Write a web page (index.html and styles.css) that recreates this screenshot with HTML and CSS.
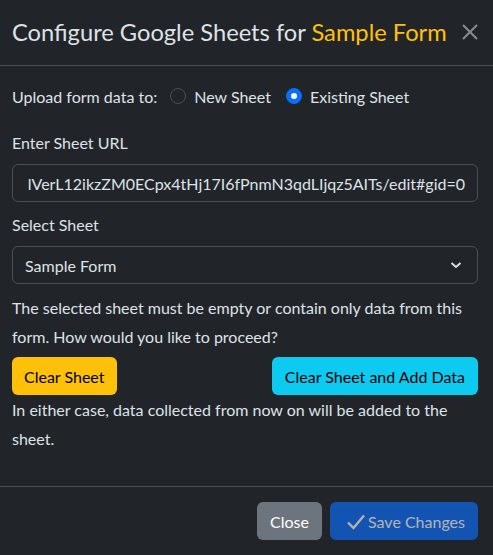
FILE: index.html
```html
<!DOCTYPE html>
<html lang="en">
<head>
<meta charset="utf-8">
<title>Configure Google Sheets</title>
<link rel="stylesheet" href="styles.css">
</head>
<body>
<div class="modal">
  <header class="modal-header">
    <h1 class="modal-title">Configure Google Sheets for <span class="accent">Sample Form</span></h1>
    <button class="btn-close" aria-label="Close">
      <svg width="16" height="16" viewBox="0 0 16 16"><path d="M1 1L15 15M15 1L1 15" stroke="currentColor" stroke-width="2" fill="none"/></svg>
    </button>
  </header>
  <main class="modal-body">
    <div class="radio-row">
      <span class="radio-label">Upload form data to:</span>
      <label class="radio"><span class="radio-input"></span>New Sheet</label>
      <label class="radio"><span class="radio-input checked"></span>Existing Sheet</label>
    </div>
    <div class="field">
      <label class="field-label">Enter Sheet URL</label>
      <div class="input"><div class="input-clip"><span class="input-text">lVerL12ikzZM0ECpx4tHj17I6fPnmN3qdLIjqz5AITs/edit#gid=0</span></div></div>
    </div>
    <div class="field field-select">
      <label class="field-label">Select Sheet</label>
      <div class="select">
        <span>Sample Form</span>
        <svg class="chevron" width="12" height="8" viewBox="0 0 12 8"><path d="M1.5 2L6 6L10.5 2" stroke="#dee2e6" stroke-width="1.8" fill="none"/></svg>
      </div>
    </div>
    <p class="note">The selected sheet must be empty or contain only data from this form. How would you like to proceed?</p>
    <div class="choice-row">
      <button class="btn btn-warning">Clear Sheet</button>
      <button class="btn btn-info">Clear Sheet and Add Data</button>
    </div>
    <p class="note note-after">In either case, data collected from now on will be added to the sheet.</p>
  </main>
  <footer class="modal-footer">
    <button class="btn btn-secondary">Close</button>
    <button class="btn btn-primary" disabled>
      <svg class="check" width="20" height="18" viewBox="0 0 20 18"><path d="M2 9.5L7.5 15L18 2.5" stroke="currentColor" stroke-width="2.4" fill="none"/></svg>Save Changes
    </button>
  </footer>
</div>
</body>
</html>
```
FILE: styles.css
```css
* { box-sizing: border-box; }
html, body {
  margin: 0;
  padding: 0;
  background: #212529;
}
body {
  font-family: Lato, "Open Sans", sans-serif;
  color: #dee2e6;
  font-size: 16px;
}
.modal {
  width: 493px;
  height: 555px;
  display: flex;
  flex-direction: column;
  background: #212529;
}
.modal-header {
  height: 66px;
  padding: 0 15px 0 12px;
  display: flex;
  align-items: center;
  justify-content: space-between;
  border-bottom: 1px solid #495057;
}
.modal-title {
  margin: 0;
  font-size: 23.7px;
  font-weight: 400;
  line-height: 1.3;
  color: #dee2e6;
  padding-bottom: 1px;
}
.accent { color: #ffc107; }
.btn-close {
  background: none;
  border: 0;
  padding: 0;
  width: 16px;
  height: 16px;
  color: #8a8c8f;
  display: flex;
  margin-bottom: 1px;
}
.modal-body {
  flex: 1;
  padding: 20px 15px 0 12px;
}
.radio-row {
  display: flex;
  align-items: center;
  height: 22px;
  line-height: 22px;
}
.radio-label { margin-right: 13px; }
.radio {
  display: flex;
  align-items: center;
  margin-right: 15px;
}
.radio-input {
  width: 16px;
  height: 16px;
  border-radius: 50%;
  border: 1px solid #495057;
  background: #212529;
  margin-right: 8px;
  margin-top: -3px;
  position: relative;
}
.radio-input.checked {
  background: #0d6efd;
  border-color: #0d6efd;
}
.radio-input.checked::after {
  content: "";
  position: absolute;
  left: 4px;
  top: 4px;
  width: 6px;
  height: 6px;
  border-radius: 50%;
  background: #fff;
}
.field { margin-top: 24px; }
.field-select { margin-top: 12px; }
.field-label {
  display: block;
  line-height: 22px;
  margin-bottom: 10px;
}
.input, .select {
  height: 38px;
  border: 1px solid #495057;
  border-radius: 6px;
  padding: 0 12px;
  display: flex;
  align-items: center;
  white-space: nowrap;
}
.input-clip {
  flex: 1;
  overflow: hidden;
  display: flex;
  justify-content: flex-end;
}
.input-text { color: #dee2e6; flex: none; }
.select {
  justify-content: space-between;
  padding-right: 15px;
}
.note {
  margin: 9px 0 0;
  line-height: 29px;
}
.choice-row {
  display: flex;
  justify-content: space-between;
  margin-top: 6px;
}
.note-after { margin-top: 0; }
.btn {
  font-family: inherit;
  font-size: 16px;
  height: 38px;
  padding: 0 12px;
  border: 0;
  border-radius: 6px;
  display: inline-flex;
  align-items: center;
  color: #000;
}
.btn-warning { background: #ffc107; }
.btn-info { background: #0dcaf0; padding: 0 13px; }
.modal-footer {
  height: 69px;
  border-top: 1px solid #495057;
  display: flex;
  justify-content: flex-end;
  align-items: center;
  gap: 8px;
  padding: 0 15px 0 12px;
}
.btn-secondary {
  background: #6c757d;
  color: #fff;
  padding: 0 13px;
}
.btn-primary {
  background: #0d6efd;
  color: #fff;
  opacity: 0.65;
  padding: 0 13px 0 16px;
}
.check { margin-right: 2px; margin-top: 1px; }
```
